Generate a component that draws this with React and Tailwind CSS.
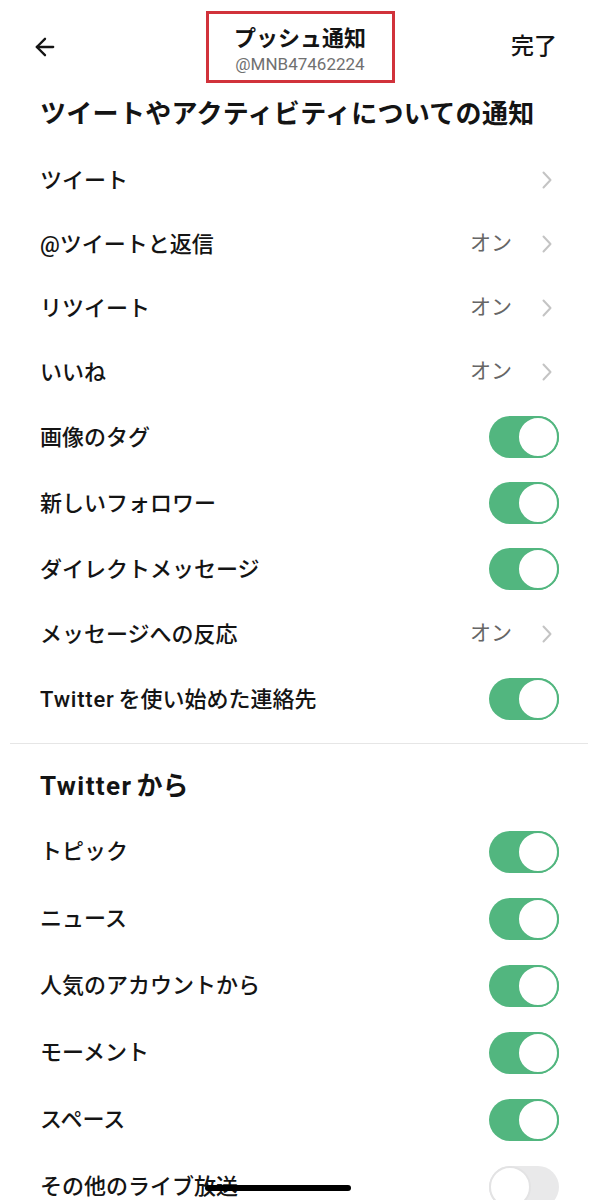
import { ArrowLeft } from 'lucide-react'

const font = { fontFamily: 'Roboto, "Noto Sans CJK JP", sans-serif' }

const Tw = ({ className = '' }) => <span className={`mr-[4px] ${className}`}>Twitter</span>

const section1 = [
  { label: 'ツイート', type: 'link' },
  { label: '@ツイートと返信', type: 'link', value: 'オン' },
  { label: 'リツイート', type: 'link', value: 'オン' },
  { label: 'いいね', type: 'link', value: 'オン' },
  { label: '画像のタグ', type: 'toggle', on: true },
  { label: '新しいフォロワー', type: 'toggle', on: true },
  { label: 'ダイレクトメッセージ', type: 'toggle', on: true },
  { label: 'メッセージへの反応', type: 'link', value: 'オン' },
  {
    label: (
      <>
        <Tw className="tracking-[0.8px]" />を使い始めた連絡先
      </>
    ),
    type: 'toggle',
    on: true,
  },
]

const section2 = [
  { label: 'トピック', on: true },
  { label: 'ニュース', on: true },
  { label: '人気のアカウントから', on: true },
  { label: 'モーメント', on: true },
  { label: 'スペース', on: true },
  { label: 'その他のライブ放送', on: false },
]

const Toggle = ({ on }) => (
  <div
    className={`w-[70px] h-[42px] rounded-full flex items-center ${
      on ? 'bg-[#52b67f] justify-end' : 'bg-[#e9e9ea] justify-start'
    }`}
  >
    <div
      className={`w-[42px] h-[42px] rounded-full bg-white border-2 ${
        on ? 'border-[#52b67f]' : 'border-[#e3e3e4]'
      }`}
    />
  </div>
)

const Chevron = () => (
  <svg width="10" height="18" viewBox="0 0 10 18" className="mr-[7px]">
    <polyline points="1.5,1.5 8.5,9 1.5,16.5" fill="none" stroke="#c4c4c4" strokeWidth="2" strokeLinecap="round" strokeLinejoin="round" />
  </svg>
)

const Row = ({ item, height }) => (
  <div className={`flex items-center justify-between pl-10 pr-[41px] ${height}`}>
    <span className="text-[22px] font-medium text-[#141414]">{item.label}</span>
    {item.type === 'link' ? (
      <div className="flex items-center">
        {item.value && <span className="text-[21px] text-[#666] mr-[30px]">{item.value}</span>}
        <Chevron />
      </div>
    ) : (
      <Toggle on={item.on} />
    )}
  </div>
)

export default function App() {
  return (
    <div className="relative w-[600px] h-[1200px] overflow-hidden bg-white text-[#141414]" style={font}>
      {/* header */}
      <div className="grid grid-cols-[1fr_auto_1fr] items-center h-[94px]">
        <div className="pl-[31px]">
          <ArrowLeft className="w-[28px] h-[28px] text-[#141414]" strokeWidth={2} />
        </div>
        <div className="w-[189px] h-[72px] border-[3px] border-[#d1323b] flex flex-col items-center justify-center pt-[8px]">
          <span className="text-[22px] font-bold leading-[26px]">プッシュ通知</span>
          <span className="text-[17px] text-[#707070] leading-[24px]">@MNB47462224</span>
        </div>
        <div className="justify-self-end pr-[43px] text-[23px] font-medium">完了</div>
      </div>

      <div className="h-[40px] flex items-center pl-10">
        <h2 className="text-[26px] font-bold tracking-[0.3px]">ツイートやアクティビティについての通知</h2>
      </div>

      <div className="mt-[14px]">
        {section1.map((item, i) => (
          <Row key={i} item={item} height={item.type === 'link' ? 'h-[64px]' : 'h-[66px]'} />
        ))}
      </div>

      <div className="mt-[11px] ml-[10px] mr-[12px] border-t border-[#e6e6e6]" />

      <div className="mt-[16px] h-[52px] flex items-center pl-10">
        <h2 className="text-[26px] font-bold">
          <Tw className="tracking-[1.4px]" />から
        </h2>
      </div>

      <div className="mt-[6px]">
        {section2.map((item) => (
          <Row key={item.label} item={{ ...item, type: 'toggle' }} height="h-[67px]" />
        ))}
      </div>

      {/* home indicator */}
      <div className="absolute left-[205px] top-[1185px] w-[146px] h-[6px] rounded-full bg-black" />
    </div>
  )
}
